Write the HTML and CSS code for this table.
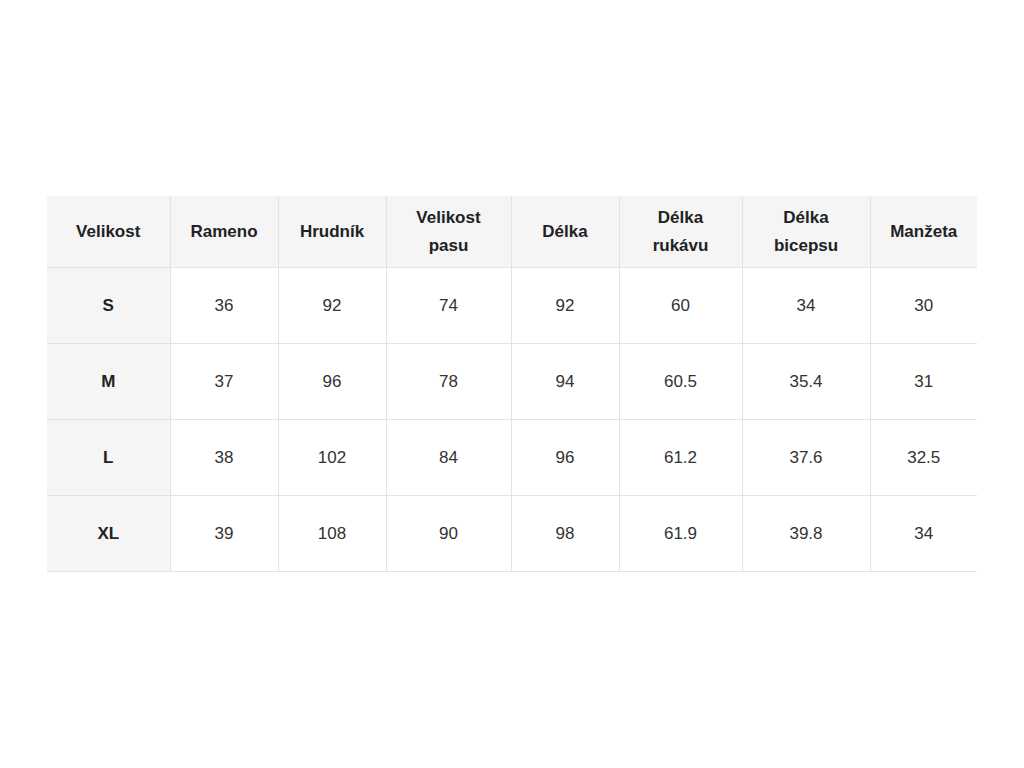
FILE: index.html
```html
<!DOCTYPE html>
<html lang="cs">
<head>
<meta charset="utf-8">
<title>Tabulka velikostí</title>
<link rel="stylesheet" href="styles.css">
</head>
<body>
<main class="page">
<table class="size-table">
<colgroup>
<col class="c1"><col class="c2"><col class="c3"><col class="c4"><col class="c5"><col class="c6"><col class="c7"><col class="c8">
</colgroup>
<thead>
<tr>
<th>Velikost</th><th>Rameno</th><th>Hrudník</th><th>Velikost<br>pasu</th><th>Délka</th><th>Délka<br>rukávu</th><th>Délka<br>bicepsu</th><th>Manžeta</th>
</tr>
</thead>
<tbody>
<tr><th>S</th><td>36</td><td>92</td><td>74</td><td>92</td><td>60</td><td>34</td><td>30</td></tr>
<tr><th>M</th><td>37</td><td>96</td><td>78</td><td>94</td><td>60.5</td><td>35.4</td><td>31</td></tr>
<tr><th>L</th><td>38</td><td>102</td><td>84</td><td>96</td><td>61.2</td><td>37.6</td><td>32.5</td></tr>
<tr><th>XL</th><td>39</td><td>108</td><td>90</td><td>98</td><td>61.9</td><td>39.8</td><td>34</td></tr>
</tbody>
</table>
</main>
</body>
</html>
```
FILE: styles.css
```css
html, body {
  margin: 0;
  padding: 0;
  background: #ffffff;
}
.page {
  height: 768px;
  display: flex;
  align-items: center;
  justify-content: center;
  font-family: "Liberation Sans", Arial, sans-serif;
  font-size: 17px;
  color: #333333;
}
.size-table {
  width: 930px;
  border-collapse: collapse;
  table-layout: fixed;
}
.c1 { width: 123px; }
.c2 { width: 108px; }
.c3 { width: 108px; }
.c4 { width: 125px; }
.c5 { width: 108px; }
.c6 { width: 123px; }
.c7 { width: 128px; }
.c8 { width: 107px; }
.size-table th,
.size-table td {
  text-align: center;
  vertical-align: middle;
  line-height: 28px;
  border-bottom: 1px solid #e3e3e3;
  border-left: 1px solid #e3e3e3;
  padding: 0 4px;
}
.size-table tr > :first-child {
  border-left: none;
}
.size-table thead th {
  background: #f5f5f5;
  color: #222222;
  font-weight: bold;
  height: 71px;
}
.size-table tbody th {
  background: #f5f5f5;
  color: #222222;
  font-weight: bold;
}
.size-table tbody th,
.size-table tbody td {
  height: 75px;
}
```
